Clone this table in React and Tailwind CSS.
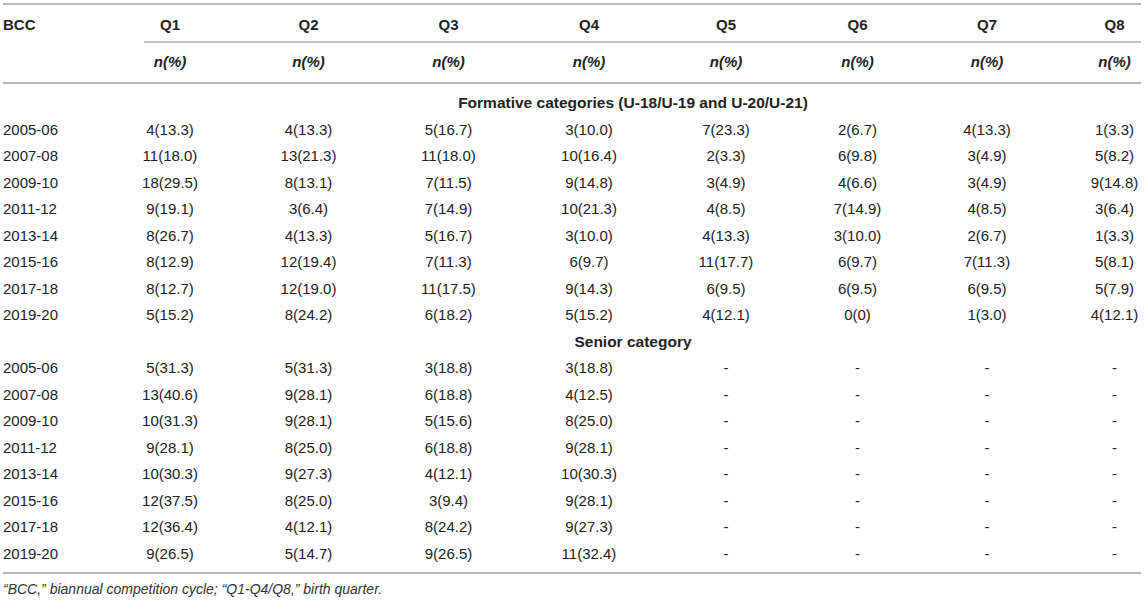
const formative = [
  ["2005-06", "4(13.3)", "4(13.3)", "5(16.7)", "3(10.0)", "7(23.3)", "2(6.7)", "4(13.3)", "1(3.3)"],
  ["2007-08", "11(18.0)", "13(21.3)", "11(18.0)", "10(16.4)", "2(3.3)", "6(9.8)", "3(4.9)", "5(8.2)"],
  ["2009-10", "18(29.5)", "8(13.1)", "7(11.5)", "9(14.8)", "3(4.9)", "4(6.6)", "3(4.9)", "9(14.8)"],
  ["2011-12", "9(19.1)", "3(6.4)", "7(14.9)", "10(21.3)", "4(8.5)", "7(14.9)", "4(8.5)", "3(6.4)"],
  ["2013-14", "8(26.7)", "4(13.3)", "5(16.7)", "3(10.0)", "4(13.3)", "3(10.0)", "2(6.7)", "1(3.3)"],
  ["2015-16", "8(12.9)", "12(19.4)", "7(11.3)", "6(9.7)", "11(17.7)", "6(9.7)", "7(11.3)", "5(8.1)"],
  ["2017-18", "8(12.7)", "12(19.0)", "11(17.5)", "9(14.3)", "6(9.5)", "6(9.5)", "6(9.5)", "5(7.9)"],
  ["2019-20", "5(15.2)", "8(24.2)", "6(18.2)", "5(15.2)", "4(12.1)", "0(0)", "1(3.0)", "4(12.1)"],
];

const senior = [
  ["2005-06", "5(31.3)", "5(31.3)", "3(18.8)", "3(18.8)"],
  ["2007-08", "13(40.6)", "9(28.1)", "6(18.8)", "4(12.5)"],
  ["2009-10", "10(31.3)", "9(28.1)", "5(15.6)", "8(25.0)"],
  ["2011-12", "9(28.1)", "8(25.0)", "6(18.8)", "9(28.1)"],
  ["2013-14", "10(30.3)", "9(27.3)", "4(12.1)", "10(30.3)"],
  ["2015-16", "12(37.5)", "8(25.0)", "3(9.4)", "9(28.1)"],
  ["2017-18", "12(36.4)", "4(12.1)", "8(24.2)", "9(27.3)"],
  ["2019-20", "9(26.5)", "5(14.7)", "9(26.5)", "11(32.4)"],
].map((r) => [...r, "-", "-", "-", "-"]);

const quarters = ["Q1", "Q2", "Q3", "Q4", "Q5", "Q6", "Q7", "Q8"];

// last column sits close to the right edge
const cellCls = (i) =>
  i === 0 ? "text-left" : i === 8 ? "text-center pl-[36px]" : "text-center";

function DataRow({ row }) {
  return (
    <tr className="h-[26.5px]">
      {row.map((v, i) => (
        <td key={i} className={`${cellCls(i)} whitespace-nowrap p-0`}>
          {v}
        </td>
      ))}
    </tr>
  );
}

function SectionRow({ label }) {
  return (
    <tr className="h-[26.5px]">
      <td className="p-0" />
      <td colSpan={8} className="p-0 pl-[24px] text-center text-[15.5px] font-bold">
        {label}
      </td>
    </tr>
  );
}

export default function App() {
  return (
    <div
      className="bg-white w-[1145px] h-[603px] pt-[3px] pl-[3px] text-[15px] leading-5 text-[#222]"
      style={{ fontFamily: '"Liberation Sans", Arial, sans-serif' }}
    >
      <table className="table-fixed border-collapse w-[1138px] border-t-2 border-b-2 border-[#b9b9b9]">
        <colgroup>
          <col className="w-[98px]" />
          <col className="w-[138px]" />
          <col className="w-[139px]" />
          <col className="w-[141px]" />
          <col className="w-[140px]" />
          <col className="w-[134px]" />
          <col className="w-[129px]" />
          <col className="w-[130px]" />
          <col className="w-[89px]" />
        </colgroup>
        <thead className="font-bold">
          <tr>
            {["BCC", ...quarters].map((q, i) => (
              <th key={q} className={`${cellCls(i)} p-0 pt-[10px] pb-[6px] font-bold`}>
                {q}
              </th>
            ))}
          </tr>
          <tr>
            <td className="p-0" />
            <td colSpan={8} className="p-0">
              <div className="ml-[43px] h-[2px] bg-[#c2c2c2]" />
            </td>
          </tr>
          <tr className="border-b-2 border-[#b9b9b9]">
            <td className="p-0" />
            {quarters.map((q, i) => (
              <td key={q} className={`${cellCls(i + 1)} p-0 pt-[9px] pb-[10px] font-bold italic`}>
                n(%)
              </td>
            ))}
          </tr>
        </thead>
        <tbody>
          <tr className="h-[7px]">
            <td colSpan={9} className="p-0" />
          </tr>
          <SectionRow label="Formative categories (U-18/U-19 and U-20/U-21)" />
          {formative.map((r) => (
            <DataRow key={"f" + r[0]} row={r} />
          ))}
          <SectionRow label="Senior category" />
          {senior.map((r) => (
            <DataRow key={"s" + r[0]} row={r} />
          ))}
          <tr className="h-[6px]">
            <td colSpan={9} className="p-0" />
          </tr>
        </tbody>
      </table>
      <p className="mt-[5px] text-[14px] italic text-[#333]">
        “BCC,” biannual competition cycle; “Q1-Q4/Q8,” birth quarter.
      </p>
    </div>
  );
}
